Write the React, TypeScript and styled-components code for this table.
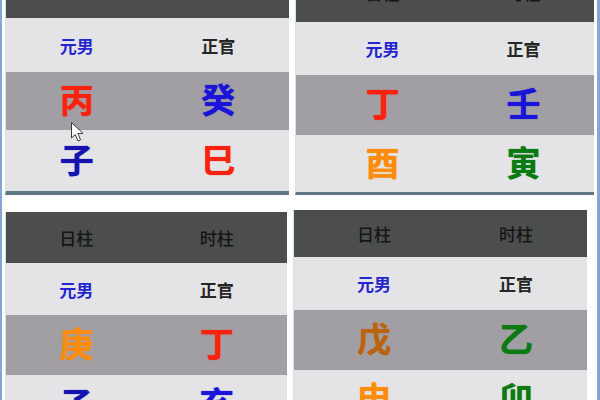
import React from "react";
import styled, { createGlobalStyle } from "styled-components";

const Global = createGlobalStyle`
  html, body { margin: 0; padding: 0; background: #ffffff; }
  body { font-family: "Noto Sans CJK SC", "Noto Sans", sans-serif; }
`;

const Frame = styled.div`
  width: 600px;
  height: 400px;
  box-sizing: border-box;
  overflow: hidden;
  background: #ffffff;
  border-left: 2px solid #86a5d6;
  border-right: 3px solid #86a5d6;
  padding-left: 3px;
  display: flex;
  flex-direction: column;
`;

const PanelRow = styled.div`
  display: flex;
  align-items: flex-start;
  gap: 6px;
  flex: none;
`;

const Panel = styled.div<{ $w: number; $rows: string; $top: number; $inset: number; $bottom: number }>`
  position: relative;
  width: ${(p) => p.$w}px;
  margin-top: ${(p) => p.$top}px;
  display: grid;
  grid-template-rows: ${(p) => p.$rows};
  border-left: 1px solid #cfe6e6;
  border-bottom: ${(p) => p.$bottom}px solid #5f7884;
  box-sizing: border-box;
  --inset: ${(p) => p.$inset}px;
`;

const Row = styled.div<{ $tone: "head" | "light" | "gray" }>`
  display: grid;
  grid-template-columns: 1fr 1fr;
  align-items: center;
  justify-items: center;
  padding-left: var(--inset);
  background: ${(p) =>
    p.$tone === "head" ? "#4b4e4d" : p.$tone === "gray" ? "#a29fa4" : "#e4e4e6"};
`;

const HeadText = styled.span`
  font-size: 17px;
  font-weight: 500;
  color: #151515;
  line-height: 1;
`;

const Label = styled.span<{ $c: string }>`
  font-size: 17px;
  font-weight: 700;
  color: ${(p) => p.$c};
  line-height: 1;
`;

const Glyph = styled.span<{ $c: string }>`
  font-size: 34px;
  font-weight: 700;
  color: ${(p) => p.$c};
  line-height: 1;
  margin-top: -4px;
  text-shadow: 0 0 1px ${(p) => p.$c};
`;

const Cursor = styled.svg`
  position: absolute;
  left: 64px;
  top: 163px;
  width: 18px;
  height: 22px;
`;

const RED = "#f8220f";
const BLUE = "#1914d8";
const DBLUE = "#1512b0";
const ORANGE = "#ff8c0a";
const GREEN = "#0b7a12";
const BROWN = "#b9630f";
const BLUE_LABEL = "#2424d0";
const DARK = "#262626";

type Cell = [string, string];
type Data = {
  w: number;
  rows: string;
  top: number;
  inset: number;
  bottom: number;
  stems: [Cell, Cell];
  branches: [Cell, Cell];
  cursor?: boolean;
};

const panels: Data[][] = [
  [
    {
      w: 284,
      rows: "60px 54px 58px 61px",
      top: -42,
      inset: 0,
      bottom: 4,
      stems: [["丙", RED], ["癸", BLUE]],
      branches: [["子", DBLUE], ["巳", RED]],
      cursor: true,
    },
    {
      w: 299,
      rows: "60px 53px 60px 57px",
      top: -38,
      inset: 16,
      bottom: 3,
      stems: [["丁", RED], ["壬", BLUE]],
      branches: [["酉", ORANGE], ["寅", GREEN]],
    },
  ],
  [
    {
      w: 282,
      rows: "51px 52px 60px 60px",
      top: 17,
      inset: 0,
      bottom: 3,
      stems: [["庚", ORANGE], ["丁", RED]],
      branches: [["子", DBLUE], ["亥", BLUE]],
    },
    {
      w: 294,
      rows: "47px 53px 60px 60px",
      top: 15,
      inset: 9,
      bottom: 3,
      stems: [["戊", BROWN], ["乙", GREEN]],
      branches: [["申", ORANGE], ["卯", GREEN]],
    },
  ],
];

function Chart({ d }: { d: Data }) {
  return (
    <Panel $w={d.w} $rows={d.rows} $top={d.top} $inset={d.inset} $bottom={d.bottom}>
      <Row $tone="head">
        <HeadText>日柱</HeadText>
        <HeadText>时柱</HeadText>
      </Row>
      <Row $tone="light">
        <Label $c={BLUE_LABEL}>元男</Label>
        <Label $c={DARK}>正官</Label>
      </Row>
      <Row $tone="gray">
        <Glyph $c={d.stems[0][1]}>{d.stems[0][0]}</Glyph>
        <Glyph $c={d.stems[1][1]}>{d.stems[1][0]}</Glyph>
      </Row>
      <Row $tone="light">
        <Glyph $c={d.branches[0][1]}>{d.branches[0][0]}</Glyph>
        <Glyph $c={d.branches[1][1]}>{d.branches[1][0]}</Glyph>
      </Row>
      {d.cursor && (
        <Cursor viewBox="0 0 18 22">
          <path
            d="M1.5 1.5 L1.5 17 L5.2 13.6 L8 20 L10.6 18.8 L7.9 12.6 L13 12.3 Z"
            fill="#ffffff"
            stroke="#3a3a3a"
            strokeWidth="1"
            strokeLinejoin="round"
          />
        </Cursor>
      )}
    </Panel>
  );
}

export default function App() {
  return (
    <>
      <Global />
      <Frame>
        {panels.map((row, i) => (
          <PanelRow key={i}>
            {row.map((d, j) => (
              <Chart key={j} d={d} />
            ))}
          </PanelRow>
        ))}
      </Frame>
    </>
  );
}
